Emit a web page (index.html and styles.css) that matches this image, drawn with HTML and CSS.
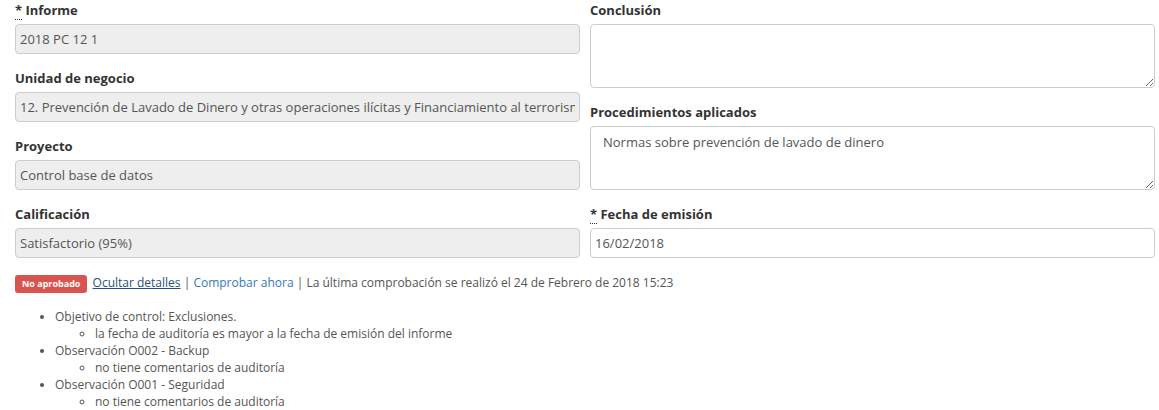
FILE: index.html
```html
<!DOCTYPE html>
<html lang="es">
<head>
<meta charset="utf-8">
<link rel="stylesheet" href="styles.css">
</head>
<body>
<div class="form">
  <div class="col">
    <div class="group">
      <label class="label"><abbr title="requerido">*</abbr> Informe</label>
      <input class="field disabled" type="text" value="2018 PC 12 1" readonly>
    </div>
    <div class="group">
      <label class="label">Unidad de negocio</label>
      <input class="field disabled" type="text" value="12. Prevención de Lavado de Dinero y otras operaciones ilícitas y Financiamiento al terrorismo" readonly>
    </div>
    <div class="group">
      <label class="label">Proyecto</label>
      <input class="field disabled" type="text" value="Control base de datos" readonly>
    </div>
    <div class="group">
      <label class="label">Calificación</label>
      <input class="field disabled" type="text" value="Satisfactorio (95%)" readonly>
    </div>
  </div>
  <div class="col">
    <div class="group">
      <label class="label">Conclusión</label>
      <textarea class="area"></textarea>
    </div>
    <div class="group">
      <label class="label">Procedimientos aplicados</label>
      <textarea class="area">Normas sobre prevención de lavado de dinero</textarea>
    </div>
    <div class="group">
      <label class="label"><abbr title="requerido">*</abbr> Fecha de emisión</label>
      <input class="field" type="text" value="16/02/2018">
    </div>
  </div>
</div>
<div class="status">
  <span class="badge">No aprobado</span>
  <a class="link dark" href="#">Ocultar detalles</a> <span class="sep">|</span> <a class="link" href="#">Comprobar ahora</a> <span class="sep">|</span> La última comprobación se realizó el 24 de Febrero de 2018 15:23
</div>
<ul class="issues">
  <li>Objetivo de control: Exclusiones.
    <ul><li>la fecha de auditoría es mayor a la fecha de emisión del informe</li></ul>
  </li>
  <li>Observación O002 - Backup
    <ul><li>no tiene comentarios de auditoría</li></ul>
  </li>
  <li>Observación O001 - Seguridad
    <ul><li>no tiene comentarios de auditoría</li></ul>
  </li>
</ul>
</body>
</html>
```
FILE: styles.css
```css
html, body {
  margin: 0;
  padding: 0;
  background: #fff;
}
body {
  font-family: "Open Sans", "Liberation Sans", sans-serif;
  font-size: 13px;
  color: #555;
}
.form {
  display: grid;
  grid-template-columns: 1fr 1fr;
  column-gap: 10px;
  padding: 0 4px 0 15px;
}
.col {
  display: flex;
  flex-direction: column;
}
.group {
  display: flex;
  flex-direction: column;
  margin-bottom: 14px;
}
.label {
  display: block;
  font-weight: 700;
  color: #333;
  line-height: 20px;
  height: 20px;
  margin-bottom: 4px;
}
.label abbr {
  text-decoration: none;
  border-bottom: 1px dotted #333;
  cursor: help;
}
.field {
  box-sizing: border-box;
  width: 100%;
  height: 30px;
  margin: 0;
  padding: 4px 4px;
  font-family: inherit;
  font-size: 13px;
  color: #555;
  background: #fff;
  border: 1px solid #ccc;
  border-radius: 4px;
  outline: none;
}
.field.disabled {
  background: #eee;
}
.area {
  box-sizing: border-box;
  width: 100%;
  height: 64px;
  margin: 0;
  padding: 6px 12px;
  font-family: inherit;
  font-size: 13px;
  line-height: 18px;
  color: #555;
  background: #fff;
  border: 1px solid #ccc;
  border-radius: 4px;
  outline: none;
  resize: vertical;
}
.status {
  padding: 0 15px;
  margin-top: 1px;
  font-size: 12px;
  line-height: 20px;
  color: #555;
}
.badge {
  display: inline-block;
  background: #d9534f;
  color: #fff;
  font-weight: 700;
  font-size: 9px;
  line-height: 18px;
  padding: 0 7px;
  border-radius: 3px;
  vertical-align: 0;
  margin-right: 2px;
}
.link {
  color: #337ab7;
  text-decoration: none;
}
.link.dark {
  color: #23527c;
  text-decoration: underline;
}
.sep {
  color: #555;
}
.issues {
  margin: 15px 0 0 15px;
  padding: 0 0 0 40px;
  font-size: 12px;
  line-height: 17px;
}
.issues ul {
  margin: 0;
  padding-left: 40px;
  list-style: circle;
}
```
